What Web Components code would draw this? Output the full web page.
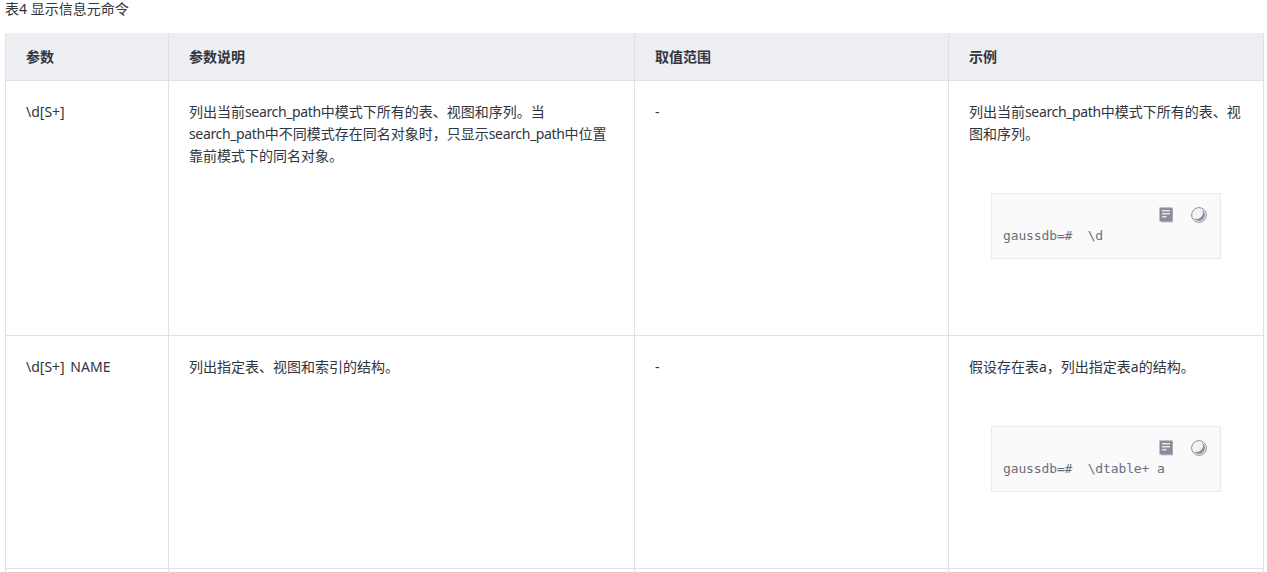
<!DOCTYPE html>
<html lang="zh">
<head>
<meta charset="utf-8">
<title>表4 显示信息元命令</title>
<style>
html, body { margin: 0; height: 572px; overflow: hidden; background: #fff; }
body { font: 14px/22px "Noto Sans", "Noto Sans CJK SC", sans-serif; color: #303540; }
.ident { letter-spacing: -0.36px; }
.name { word-spacing: 2px; }
</style>
</head>
<body>
<doc-table caption="表4 显示信息元命令">
  <doc-row head>
    <doc-cell>参数</doc-cell>
    <doc-cell>参数说明</doc-cell>
    <doc-cell>取值范围</doc-cell>
    <doc-cell>示例</doc-cell>
  </doc-row>
  <doc-row>
    <doc-cell>\d[S+]</doc-cell>
    <doc-cell>列出当前<span class="ident">search_path</span>中模式下所有的表、视图和序列。当<span class="ident">search_path</span>中不同模式存在同名对象时，只显示<span class="ident">search_path</span>中位置<wbr>靠前模式下的同名对象。</doc-cell>
    <doc-cell>-</doc-cell>
    <doc-cell>列出当前<span class="ident">search_path</span>中模式下所有的表、视<wbr>图和序列。<code-block>gaussdb=#  \d</code-block></doc-cell>
  </doc-row>
  <doc-row>
    <doc-cell><span class="name">\d[S+] NAME</span></doc-cell>
    <doc-cell>列出指定表、视图和索引的结构。</doc-cell>
    <doc-cell>-</doc-cell>
    <doc-cell>假设存在表a，列出指定表a的结构。<code-block>gaussdb=#  \dtable+ a</code-block></doc-cell>
  </doc-row>
  <doc-row>
    <doc-cell></doc-cell>
    <doc-cell></doc-cell>
    <doc-cell></doc-cell>
    <doc-cell></doc-cell>
  </doc-row>
</doc-table>

<script>
"use strict";

const tableTemplate = document.createElement('template');
tableTemplate.innerHTML = `<style>
:host {
    display: block;
    padding: 0 3px 0 5px;
}
.caption {
    height: 34px;
    line-height: 20px;
    margin-top: -1px;
}
.rows {
    border-right: 1px solid #dfe1e6;
    border-left: 1px solid #dfe1e6;
}
</style>
<div class="caption"></div>
<div class="rows"><slot></slot></div>`;

class DocTable extends HTMLElement {
    constructor() {
        super();
        this.attachShadow({ mode: 'open' });
        this.shadowRoot.appendChild(tableTemplate.content.cloneNode(true));
    }

    connectedCallback() {
        this.shadowRoot.querySelector('.caption').textContent = this.getAttribute('caption');
    }
}

const rowTemplate = document.createElement('template');
rowTemplate.innerHTML = `<style>
:host {
    display: grid;
    grid-template-columns: 163px 466px 314px 1fr;
    border-bottom: 1px solid #dfe1e6;
}
:host([head]) {
    background: #eeeff3;
    font-weight: 700;
    height: 47px;
}
</style>
<slot></slot>`;

class DocRow extends HTMLElement {
    constructor() {
        super();
        this.attachShadow({ mode: 'open' });
        this.shadowRoot.appendChild(rowTemplate.content.cloneNode(true));
    }
}

const cellTemplate = document.createElement('template');
cellTemplate.innerHTML = `<style>
:host {
    display: block;
    padding: 20px;
    border-right: 1px solid #dfe1e6;
    min-width: 0;
}
:host(:last-child) {
    border-right: 0;
}
:host-context([head]) {
    padding: 13px 20px 12px;
}
</style>
<slot></slot>`;

class DocCell extends HTMLElement {
    constructor() {
        super();
        this.attachShadow({ mode: 'open' });
        this.shadowRoot.appendChild(cellTemplate.content.cloneNode(true));
    }
}

const codeTemplate = document.createElement('template');
codeTemplate.innerHTML = `<style>
:host {
    display: block;
    margin: 48px 22px 56px;
    height: 64px;
    background: #fafafa;
    border: 1px solid #e8e8f8;
    position: relative;
}
.tools {
    position: absolute;
    top: 13px;
    right: 13px;
    display: flex;
    gap: 17px;
}
svg { display: block; }
pre {
    margin: 0;
    padding: 31px 11px 0;
    font: 13px/22px "DejaVu Sans Mono", monospace;
    letter-spacing: -0.13px;
    color: #6c6f7a;
}
</style>
<div class="tools">
  <svg width="15" height="16" viewBox="0 0 15 16">
    <path fill="#c4c5cc" d="M13 2h1v13.5H2V14h11z"/>
    <rect x="0.5" y="0.5" width="13" height="14" fill="#8a8c99"/>
    <path fill="#e4e5ea" d="M3 3h8v1.5H3zM3 6h8v1.5H3zM3 9h4.5v1.5H3z"/>
  </svg>
  <svg width="16" height="16" viewBox="0 0 16 16">
    <circle cx="8" cy="8" r="7.4" fill="#f4f4f6" stroke="#8f909c" stroke-width="1"/>
    <path fill="#8f909c" d="M11 2.8A6 6 0 1 1 2.8 11 6 6 0 0 0 11 2.8z"/>
  </svg>
</div>
<pre><slot></slot></pre>`;

class CodeBlock extends HTMLElement {
    constructor() {
        super();
        this.attachShadow({ mode: 'open' });
        this.shadowRoot.appendChild(codeTemplate.content.cloneNode(true));
    }
}

customElements.define('doc-table', DocTable);
customElements.define('doc-row', DocRow);
customElements.define('doc-cell', DocCell);
customElements.define('code-block', CodeBlock);
</script>
</body>
</html>
